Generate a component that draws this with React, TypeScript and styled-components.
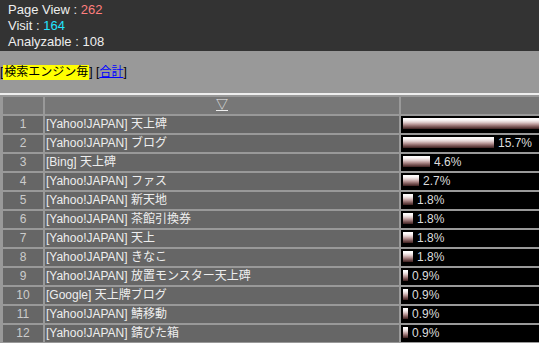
import React from 'react';
import styled, { createGlobalStyle } from 'styled-components';

const GlobalStyle = createGlobalStyle`
  html, body {
    margin: 0;
    padding: 0;
    background: #999999;
    overflow: hidden;
    font-family: "Liberation Sans", "Noto Sans CJK JP", sans-serif;
  }
`;

interface Row {
	word: string;
	pct: number;
}

const rows: Row[] = [
	{ word: '[Yahoo!JAPAN] 天上碑', pct: 46.3 },
	{ word: '[Yahoo!JAPAN] ブログ', pct: 15.7 },
	{ word: '[Bing] 天上碑', pct: 4.6 },
	{ word: '[Yahoo!JAPAN] ファス', pct: 2.7 },
	{ word: '[Yahoo!JAPAN] 新天地', pct: 1.8 },
	{ word: '[Yahoo!JAPAN] 茶館引換券', pct: 1.8 },
	{ word: '[Yahoo!JAPAN] 天上', pct: 1.8 },
	{ word: '[Yahoo!JAPAN] きなこ', pct: 1.8 },
	{ word: '[Yahoo!JAPAN] 放置モンスター天上碑', pct: 0.9 },
	{ word: '[Google] 天上牌ブログ', pct: 0.9 },
	{ word: '[Yahoo!JAPAN] 鯖移動', pct: 0.9 },
	{ word: '[Yahoo!JAPAN] 錆びた箱', pct: 0.9 },
];

const Stats = styled.div`
	background: #333333;
	color: #eeeeee;
	font-size: 13px;
	line-height: 16px;
	padding: 2px 8px 1px;
`;

const StatLine = styled.div`
	height: 16px;
	white-space: nowrap;
`;

const Num = styled.span<{ $color?: string }>`
	color: ${(p) => p.$color || '#eeeeee'};
`;

const Nav = styled.div`
	margin-top: 14px;
	height: 15px;
	font-size: 12px;
	line-height: 15px;
	color: #000;
	white-space: nowrap;
`;

const Current = styled.span`
	display: inline-block;
	vertical-align: top;
	height: 15px;
	line-height: 15px;
	padding: 0 1px;
	background: #ffff00;
`;

const NavLink = styled.a`
	color: #0000ff;
	text-decoration: underline;
	cursor: pointer;
`;

const Rule = styled.div`
	margin-top: 13px;
	height: 2px;
	background: #eeeeee;
`;

const Table = styled.table`
	border-collapse: separate;
	border-spacing: 2px;
	margin-left: 1px;
	table-layout: fixed;
	width: 748px;
	font-size: 12px;
`;

const HeadCell = styled.th<{ $w?: number }>`
	background: #777777;
	height: 17px;
	padding: 0;
	font-weight: normal;
	text-align: center;
	width: ${(p) => (p.$w ? `${p.$w}px` : 'auto')};
	line-height: 17px;
`;

const SortLink = styled.a`
	color: #eeeeee;
	text-decoration: underline;
	font-size: 12px;
`;

const NoCell = styled.td`
	background: #666666;
	color: #cccccc;
	height: 17px;
	padding: 0;
	text-align: center;
	line-height: 17px;
`;

const WordCell = styled.td`
	background: #666666;
	color: #eeeeee;
	height: 17px;
	padding: 0 1px;
	line-height: 17px;
	white-space: nowrap;
	overflow: hidden;
`;

const BarCell = styled.td`
	background: #000000;
	color: #dddddd;
	height: 17px;
	padding: 0 2px;
	line-height: 17px;
	white-space: nowrap;
`;

const Bar = styled.span`
	display: inline-block;
	vertical-align: middle;
	height: 11px;
	margin-top: -2px;
	margin-right: 4px;
	background: linear-gradient(
		to bottom,
		#ffffff 0%,
		#fbf6f6 18%,
		#e2d0d0 38%,
		#b89696 58%,
		#7e5a5a 78%,
		#3e2020 100%
	);
`;

const Pct = styled.span`
	color: #dddddd;
`;

export default function App() {
	return (
		<>
			<GlobalStyle />
			<Stats>
				<StatLine>
					Page View : <Num $color="#ff7f7f">262</Num>
				</StatLine>
				<StatLine>
					Visit : <Num $color="#22e4ff">164</Num>
				</StatLine>
				<StatLine>
					Analyzable : <Num>108</Num>
				</StatLine>
			</Stats>
			<Nav>
				[<Current>検索エンジン毎</Current>] [<NavLink>合計</NavLink>]
			</Nav>
			<Rule />
			<Table>
				<thead>
					<tr>
						<HeadCell $w={40} />
						<HeadCell $w={354}>
							<SortLink>▽</SortLink>
						</HeadCell>
						<HeadCell />
					</tr>
				</thead>
				<tbody>
					{rows.map((r, i) => (
						<tr key={i}>
							<NoCell>{i + 1}</NoCell>
							<WordCell>{r.word}</WordCell>
							<BarCell>
								<Bar style={{ width: Math.round(r.pct * 5.8) }} />
								<Pct>{r.pct.toFixed(1)}%</Pct>
							</BarCell>
						</tr>
					))}
				</tbody>
			</Table>
		</>
	);
}
